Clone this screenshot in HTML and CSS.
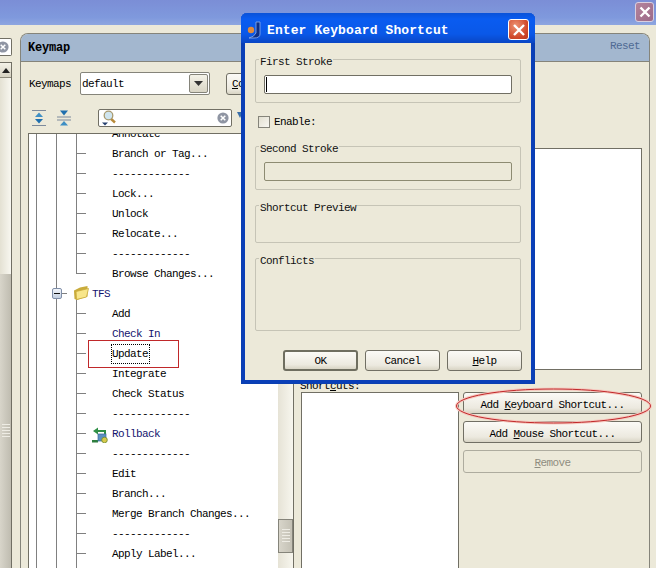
FILE: index.html
```html
<!DOCTYPE html>
<html lang="en">
<head>
<meta charset="utf-8">
<title>Keymap</title>
<link rel="stylesheet" href="styles.css">
</head>
<body>
<div class="app">
  <div class="topbar">
    <button class="top-close"><svg width="12" height="12" viewBox="0 0 12 12"><path d="M1.5 1.5L10.5 10.5M10.5 1.5L1.5 10.5" stroke="#fff" stroke-width="2.4" fill="none"/></svg></button>
  </div>
  <div class="workspace">
    <div class="rail">
      <div class="rail-search"><svg class="clear-icon" width="12" height="12" viewBox="0 0 12 12"><circle cx="6" cy="6" r="5.6" fill="#8f95a3"/><path d="M3.7 3.7L8.3 8.3M8.3 3.7L3.7 8.3" stroke="#fff" stroke-width="1.5"/></svg></div>
      <div class="rail-scroll">
        <div class="rail-up"><svg width="8" height="5" viewBox="0 0 8 5"><path d="M4 0L8 5H0Z" fill="#222"/></svg></div>
        <div class="rail-track"></div>
        <div class="rail-thumb"><div class="grip rail-grip"></div></div>
      </div>
    </div>
    <section class="panel">
      <header class="panel-head">
        <h1 class="panel-title">Keymap</h1>
        <span class="reset">Reset</span>
      </header>
      <div class="panel-body">
        <div class="keymaps-row">
          <span class="keymaps-label">Keymaps</span>
          <div class="select"><span class="select-text">default</span><span class="select-btn"><svg width="9" height="5" viewBox="0 0 9 5"><path d="M0 0H9L4.5 5Z" fill="#333"/></svg></span></div>
          <button class="btn copy-btn"><u>C</u>opy...</button>
        </div>
        <div class="search-row">
          <svg class="tool-icon" width="14" height="16" viewBox="0 0 14 16"><path d="M0 .5H14M0 15.5H14" stroke="#7d8a9c"/><path d="M7 2.5L11 7H3Z" fill="#3f8fc4"/><path d="M3 9H11L7 13.5Z" fill="#1f6fae"/></svg>
          <svg class="tool-icon" width="14" height="16" viewBox="0 0 14 16"><path d="M0 7H14M0 10H14" stroke="#7d8a9c"/><path d="M3 .5H11L7 5.5Z" fill="#1f6fae"/><path d="M7 11L11 15.5H3Z" fill="#3f8fc4"/></svg>
          <div class="search">
            <svg class="search-icon" width="14" height="16" viewBox="0 0 14 16"><path d="M7.5 7.5L13 12.5" stroke="#b88a3a" stroke-width="2.4"/><circle cx="6.5" cy="5.5" r="4.3" fill="#cfe5ef" stroke="#a89a70" stroke-width="1.3"/><path d="M0 12.5H6L3 15.5Z" fill="#26406e"/></svg>
            <svg class="clear-icon" width="12" height="12" viewBox="0 0 12 12"><circle cx="6" cy="6" r="5.6" fill="#8f95a3"/><path d="M3.7 3.7L8.3 8.3M8.3 3.7L3.7 8.3" stroke="#fff" stroke-width="1.5"/></svg>
          </div>
          <svg class="filter-icon" width="6" height="6" viewBox="0 0 6 6"><path d="M0 0H6L3 6Z" fill="#3a6ea8"/></svg>
        </div>
        <div class="content">
          <div class="tree-box">
            <ul class="tree">
              <li class="row">Annotate</li>
              <li class="row">Branch or Tag...</li>
              <li class="row">-------------</li>
              <li class="row">Lock...</li>
              <li class="row">Unlock</li>
              <li class="row">Relocate...</li>
              <li class="row">-------------</li>
              <li class="row last">Browse Changes...</li>
              <li class="row-group">
                <span class="expander"></span><span class="dash"></span>
                <svg class="folder" width="16" height="16" viewBox="0 0 16 16"><path d="M1 5.5L7 2.5L14.5 1V11.5L4 15L1.5 14Z" fill="#c9ac3c"/><path d="M3 6.5L15.5 3.5L13.5 12L3.5 14.500Z" fill="#f8e68a" stroke="#c9a93a" stroke-width=".8"/></svg>
                <span class="group-name">TFS</span>
              </li>
              <li class="row first">Add</li>
              <li class="row link">Check In</li>
              <li class="row selected"><span class="focus">Update</span></li>
              <li class="row">Integrate</li>
              <li class="row">Check Status</li>
              <li class="row">-------------</li>
              <li class="row link with-icon">
                <svg class="rollback" width="16" height="16" viewBox="0 0 16 16"><path d="M13 9V4H5" fill="none" stroke="#2f8f46" stroke-width="2"/><path d="M6 .5V7.500L1 4Z" fill="#2f8f46"/><rect x="0" y="13" width="6" height="2.500" fill="#2f7f3f"/><rect x="6" y="7" width="8" height="7" fill="#5b8fc0" stroke="#3a6a9a" stroke-width=".7"/><circle cx="12.500" cy="13" r="2.800" fill="#d8c94a" stroke="#6f8a2a" stroke-width=".8"/></svg>
                <span>Rollback</span>
              </li>
              <li class="row">-------------</li>
              <li class="row">Edit</li>
              <li class="row">Branch...</li>
              <li class="row">Merge Branch Changes...</li>
              <li class="row">-------------</li>
              <li class="row">Apply Label...</li>
              <li class="row"></li>
            </ul>
            <div class="tree-scroll"><div class="tree-thumb"><div class="grip"></div></div></div>
          </div>
          <div class="details">
            <div class="list upper-list"></div>
            <div class="shortcuts-label">Short<u>c</u>uts:</div>
            <div class="shortcuts">
              <div class="list lower-list"></div>
              <div class="actions">
                <button class="btn action">Add <u>K</u>eyboard Shortcut...</button>
                <button class="btn action">Add <u>M</u>ouse Shortcut...</button>
                <button class="btn action disabled"><u>R</u>emove</button>
              </div>
            </div>
          </div>
        </div>
      </div>
    </section>
  </div>

  <svg class="oval" width="199" height="38" viewBox="0 0 199 38"><ellipse cx="99.500" cy="19" rx="97" ry="17" fill="none" stroke="#f6c9c0" stroke-width="3"/><ellipse cx="99.500" cy="19" rx="97" ry="17" fill="none" stroke="#c0282a" stroke-width="1"/></svg>

  <div class="dialog">
    <div class="dialog-title">
      <svg class="java-icon" width="16" height="18" viewBox="0 0 16 18"><path d="M10 1H14V13Q14 17 8 17H3Q8 16 10 12Z" fill="#0d2f86" stroke="#8fb0ea" stroke-width=".8"/><circle cx="5" cy="9" r="3.200" fill="#e08a3c"/></svg>
      <span class="dialog-name">Enter Keyboard Shortcut</span>
      <button class="dialog-close"><svg width="14" height="14" viewBox="0 0 14 14"><path d="M2 2L12 12M12 2L2 12" stroke="#fff" stroke-width="2.400" fill="none"/></svg></button>
    </div>
    <div class="dialog-body">
      <div class="group group-field">
        <span class="legend">First Stroke</span>
        <div class="field active"><span class="caret"></span></div>
      </div>
      <label class="enable"><span class="check"></span><span>Enable:</span></label>
      <div class="group group-field">
        <span class="legend">Second Stroke</span>
        <div class="field off"></div>
      </div>
      <div class="group group-preview">
        <span class="legend">Shortcut Preview</span>
      </div>
      <div class="group group-conflicts">
        <span class="legend">Conflicts</span>
      </div>
      <div class="dialog-actions">
        <button class="btn dlg-btn default">OK</button>
        <button class="btn dlg-btn">Cancel</button>
        <button class="btn dlg-btn"><u>H</u>elp</button>
      </div>
    </div>
  </div>
</div>
</body>
</html>
```
FILE: styles.css
```css
* { box-sizing: border-box; }
html, body { margin: 0; padding: 0; }
body { width: 656px; height: 568px; overflow: hidden; background: #ece9d9; }
.app {
  position: relative; width: 656px; height: 568px; overflow: hidden;
  display: flex; flex-direction: column; background: #ece9d9;
  font-family: "Liberation Mono", monospace; font-size: 11px; letter-spacing: -0.6px; color: #000;
}
button { font: inherit; letter-spacing: inherit; padding: 0; margin: 0; }
u { text-underline-offset: 1px; }

.topbar {
  height: 25px; flex: none; display: flex; justify-content: flex-end; align-items: flex-start;
  padding: 2px 2px 0 0;
  background: linear-gradient(#7b8ed6, #7f99dd 70%, #8ea6e0);
}
.top-close {
  width: 19px; height: 20px; border: 1px solid #d9cfe0; border-radius: 3px;
  background: linear-gradient(135deg, #b4849c, #9c6a8a);
  display: flex; align-items: center; justify-content: center;
}

.workspace { flex: 1; display: flex; min-height: 0; }
.rail { width: 12px; flex: none; margin-right: 8px; padding-top: 13px; display: flex; flex-direction: column; }
.rail-search {
  height: 18px; flex: none; background: #fff; border: 1px solid #716f64; border-left: 0; border-radius: 0 2px 2px 0;
  display: flex; align-items: center; justify-content: flex-end; padding-right: 2px; overflow: hidden;
}
.rail-search .clear-icon { flex: none; }
.rail-scroll {
  flex: 1; margin-top: 6px; border: 1px solid #716f64; border-left: 0; border-bottom: 0;
  display: flex; flex-direction: column; min-height: 0;
}
.rail-up {
  height: 15px; flex: none; border-bottom: 1px solid #8d8a7c;
  background: linear-gradient(#f4f2e8, #d6d2c2);
  display: flex; align-items: center; justify-content: center;
}
.rail-track { height: 196px; flex: none; background: linear-gradient(90deg, #e4e1d3, #f8f7f0); }
.rail-thumb {
  flex: 1; background: linear-gradient(90deg, #d8d5ca, #bfbcb0);
  padding-top: 150px; display: flex; justify-content: center; align-items: flex-start;
}
.grip {
  width: 8px; height: 14px;
  background: repeating-linear-gradient(#eeece4 0 1px, transparent 1px 3px);
}

.panel {
  flex: 1; min-width: 0; margin: 8px 6px 0 0;
  border: 1px solid #85847a; border-bottom: 0; border-radius: 8px 8px 0 0;
  display: flex; flex-direction: column; overflow: hidden;
}
.panel-head {
  height: 28px; flex: none; background: #a3b7cf; border-bottom: 1px solid #85847a;
  display: flex; align-items: center; justify-content: space-between; padding: 1px 9px 0 7px;
}
.panel-title { margin: 0; font-size: 12px; font-weight: bold; letter-spacing: -0.2px; }
.reset { color: #4f6a94; margin-top: -4px; }
.panel-body { flex: 1; min-height: 0; padding: 10px 7px 0 7px; display: flex; flex-direction: column; }

.keymaps-row { height: 23px; flex: none; display: flex; align-items: center; }
.keymaps-label { width: 52px; padding-left: 1px; flex: none; }
.select {
  width: 130px; height: 23px; flex: none; background: #fff; border: 1px solid #85847a; border-radius: 2px;
  display: flex; align-items: center; justify-content: space-between; padding: 0 1px 0 1px;
}
.select-btn {
  width: 19px; height: 19px; border: 1px solid #85847a; border-radius: 2px;
  background: linear-gradient(#f4f2e8, #d9d5c5);
  display: flex; align-items: center; justify-content: center;
}
.copy-btn { width: 60px; height: 22px; flex: none; margin-left: 16px; text-align: left; padding-left: 5px; }

.search-row { height: 18px; margin-top: 14px; flex: none; display: flex; align-items: center; }
.tool-icon { flex: none; margin-left: 4px; margin-top: -1px; }
.tool-icon + .tool-icon { margin-left: 11px; }
.search {
  width: 134px; height: 18px; flex: none; margin-left: 27px; background: #fff;
  border: 1px solid #716f64; border-radius: 2px;
  display: flex; align-items: center; justify-content: space-between; padding: 0 2px 0 3px;
}
.filter-icon { flex: none; margin: -6px 0 0 5px; }

.content { flex: 1; min-height: 0; margin-top: 6px; display: flex; }
.tree-box {
  width: 266px; flex: none; display: flex; overflow: hidden;
  border: 1px solid #716f64; border-bottom: 0; background: #fff;
}
.tree {
  flex: 1; min-width: 0; list-style: none; margin: -10px 0 0 0; padding: 0;
  background:
    linear-gradient(#808080, #808080) 7px 0 / 1px 100% no-repeat,
    linear-gradient(#808080, #808080) 27px 0 / 1px 100% no-repeat;
}
.row {
  position: relative; height: 20px; line-height: 20px; padding-left: 83px; white-space: nowrap;
  background:
    linear-gradient(#808080, #808080) 47px 0 / 1px 100% no-repeat,
    linear-gradient(#808080, #808080) 47px 9px / 10px 1px no-repeat;
}
.row.last {
  background:
    linear-gradient(#808080, #808080) 47px 0 / 1px 10px no-repeat,
    linear-gradient(#808080, #808080) 47px 9px / 10px 1px no-repeat;
}
.link { color: #14146e; }
.with-icon { display: flex; align-items: center; padding-left: 63px; gap: 4px; }
.rollback { flex: none; margin-top: 2px; }
.row-group {
  height: 20px; display: flex; align-items: center; padding-left: 23px; color: #14146e;
  background: linear-gradient(#808080, #808080) 47px 15px / 1px 5px no-repeat;
}
.expander {
  position: relative; width: 10px; height: 11px; flex: none; background: linear-gradient(#f2f5fa, #c3cfe0);
  border: 1px solid #7f8ea8; border-radius: 2px; margin-top: -1px;
}
.expander::after { content: ""; position: absolute; left: 1px; right: 1px; top: 4px; height: 1px; background: #111; }
.dash { width: 5px; height: 1px; flex: none; background: #808080; margin-top: -1px; }
.folder { flex: none; margin-left: 6px; margin-top: -2px; }
.group-name { margin-left: 3px; }
.selected::after {
  content: ""; position: absolute; left: 59px; top: -4px; width: 89px; height: 26px; border: 1px solid #c0282a;
}
.focus { display: inline-block; height: 20px; line-height: 18px; border: 1px dotted #000; padding: 0 1px 0 0; margin-left: -1px; vertical-align: top; }

.tree-scroll {
  width: 15px; flex: none; position: relative;
  background: linear-gradient(90deg, #e6e3d6, #f7f6ee);
}
.tree-thumb {
  position: absolute; left: 0; right: 0; top: 385px; height: 34px;
  border: 1px solid #85847a; background: linear-gradient(90deg, #d8d5ca, #c4c1b5);
  display: flex; align-items: center; justify-content: center;
}

.details { flex: 1; min-width: 0; margin-left: 7px; padding-top: 15px; display: flex; flex-direction: column; }
.list { background: #fff; border: 1px solid #716f64; }
.upper-list { height: 222px; flex: none; border-top-color: #716f64; }
.shortcuts-label { height: 14px; line-height: 14px; margin: 8px 0 0 -1px; padding-top: 1px; flex: none; }
.shortcuts { flex: 1; min-height: 0; display: flex; gap: 4px; }
.lower-list { width: 158px; flex: none; border-bottom: 0; }
.actions { flex: 1; display: flex; flex-direction: column; gap: 7px; }

.btn {
  border: 1px solid #716f64; border-radius: 3px; color: #000;
  background: linear-gradient(#fbfaf6, #ece9df 75%, #d8d4c4);
}
.action { height: 22px; flex: none; padding-top: 3px; }
.action.disabled { height: 23px; padding-top: 2px; border-color: #aeac9f; color: #8f8d80; background: #ece9d9; }

.oval { position: absolute; left: 454px; top: 387px; pointer-events: none; }

.dialog {
  position: absolute; left: 241px; top: 13px; width: 294px; height: 371px;
  background: #0a3fb8; border-radius: 6px 6px 0 0;
  display: flex; flex-direction: column; padding: 0 4px 4px 4px;
  box-shadow: inset 0 1px 0 #2c6df0, inset 0 0 0 1px #0b3fb0;
}
.dialog-title {
  height: 30px; flex: none; margin: 0 -4px; padding: 3px 6px 0 5px;
  display: flex; align-items: center; border-radius: 6px 6px 0 0;
  background: linear-gradient(#0a52d8, #0a5cf0 20%, #0a58e8 70%, #0a46c4);
}
.java-icon { flex: none; }
.dialog-name { margin: 1px 0 0 5px; color: #fff; font-weight: bold; font-size: 13px; letter-spacing: .1px; flex: 1; }
.dialog-close {
  width: 21px; height: 21px; border: 1px solid #fff; border-radius: 3px; flex: none;
  background: radial-gradient(circle at 35% 30%, #ec9272, #d0482a 65%, #b8381f);
  display: flex; align-items: center; justify-content: center;
}
.dialog-body { flex: 1; min-height: 0; background: #ece9d9; padding: 16px 10px 0 10px; display: flex; flex-direction: column; }

.group { flex: none; border: 1px solid #c6c4b6; border-radius: 2px; padding: 0 8px; }
.legend { display: block; width: fit-content; height: 14px; line-height: 14px; margin: -5px 0 0 -5px; padding: 0 1px; background: #ece9d9; color: #111; position: relative; }
.group-field { height: 44px; }
.field { height: 19px; margin-top: 6px; border: 1px solid #716f64; border-radius: 2px; display: flex; align-items: center; padding-left: 1px; }
.field.active { background: #fff; }
.field.off { border-color: #8d8b72; background: #ece9d9; }
.caret { width: 1px; height: 15px; background: #000; }
.enable { height: 12px; margin: 13px 0 18px 3px; flex: none; display: flex; align-items: center; gap: 4px; }
.check { width: 12px; height: 12px; border: 1px solid #85847a; background: linear-gradient(135deg, #e2dfd0, #f8f7f2); flex: none; }
.group-preview { height: 38px; margin-top: 15px; }
.group-conflicts { height: 73px; margin-top: 15px; }
.dialog-actions { margin-top: 19px; flex: none; display: flex; justify-content: flex-end; gap: 7px; margin-right: -1px; }
.dlg-btn { width: 75px; height: 21px; padding-top: 1px; }
.dlg-btn.default { border: 2px solid #6f6e60; }
```
